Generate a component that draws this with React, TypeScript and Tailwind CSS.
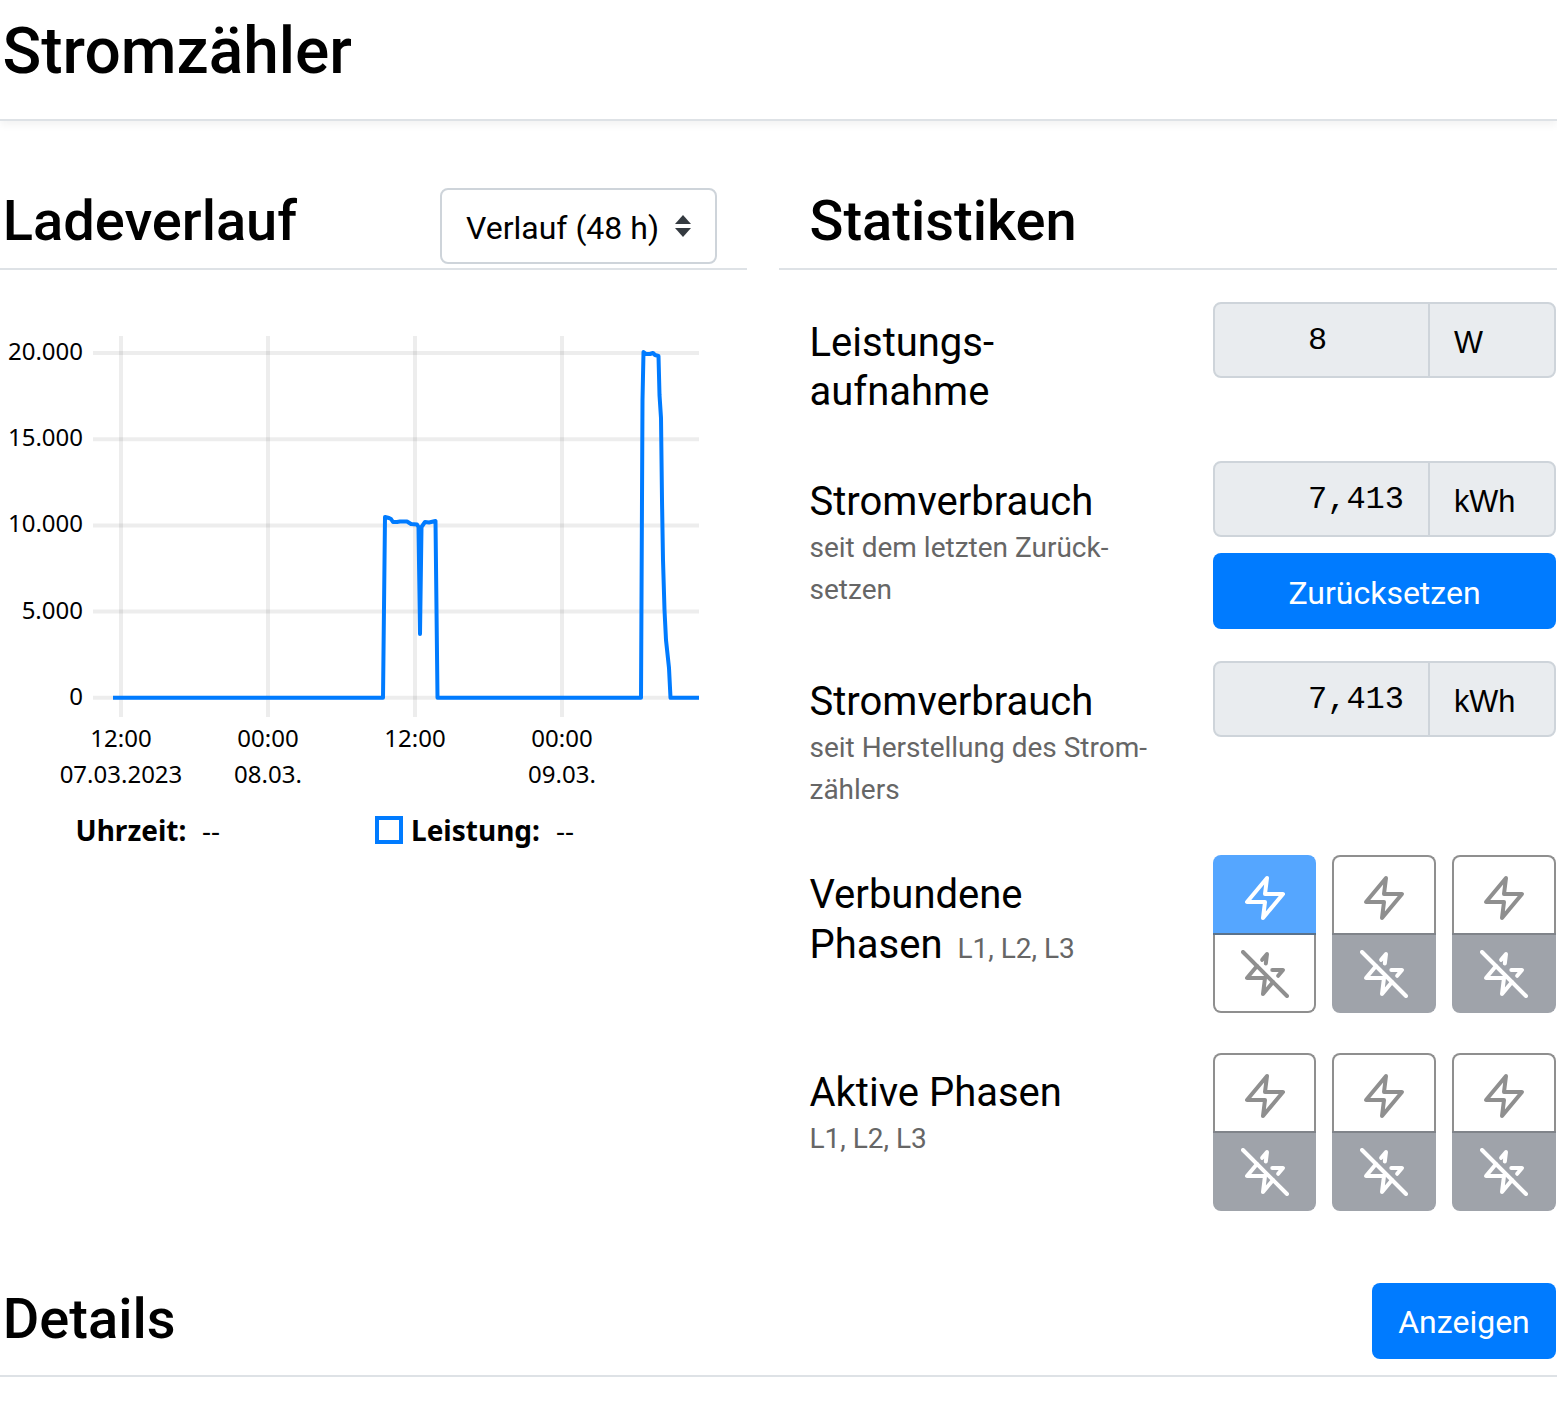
const blue = '#007bff';

function ZapIcon() {
	return (
		<svg
			viewBox="0 0 24 24"
			width="48"
			height="48"
			fill="none"
			stroke="currentColor"
			strokeWidth="2"
			strokeLinecap="round"
			strokeLinejoin="round"
		>
			<polygon points="13 2 3 14 12 14 11 22 21 10 12 10 13 2" />
		</svg>
	);
}

function ZapOff() {
	return (
		<svg
			viewBox="0 0 24 24"
			width="48"
			height="48"
			fill="none"
			stroke="currentColor"
			strokeWidth="2"
			strokeLinecap="round"
			strokeLinejoin="round"
		>
			<polyline points="12.41 6.75 13 2 10.57 4.92" />
			<polyline points="18.57 12.91 21 10 15.66 10" />
			<polyline points="8 8 3 14 12 14 11 22 16 16" />
			<line x1="1" y1="1" x2="23" y2="23" />
		</svg>
	);
}

function PhaseToggle({ active, muted, className }: { active?: boolean; muted?: boolean; className?: string }) {
	return (
		<div className={`flex h-[158px] flex-col ${className ?? 'flex-1'}`}>
			<div
				className={`flex h-[78px] items-center justify-center rounded-t-[8px] border-2 border-b-0 pt-[5px] ${
					active ? 'border-[#55a6ff] bg-[#55a6ff] text-white' : 'border-[#8f8f8f] bg-white text-[#8f8f8f]'
				}`}
			>
				<ZapIcon />
			</div>
			<div className={`h-[2px] ${active ? 'bg-[#5a728c]' : 'bg-[#80848a]'}`} />
			<div
				className={`flex h-[78px] items-center justify-center rounded-b-[8px] border-2 border-t-0 pt-[1px] ${
					muted ? 'border-[#9fa3aa] bg-[#9fa3aa] text-white' : 'border-[#8f8f8f] bg-white text-[#8f8f8f]'
				}`}
			>
				<ZapOff />
			</div>
		</div>
	);
}

function ValueBox({ value, unit }: { value: string; unit: string }) {
	return (
		<div className="flex h-[76px] w-[343px] rounded-[8px] border-2 border-[#ced4da] bg-[#e9ecef] text-black">
			<div className="w-[215px] border-r-2 border-[#ced4da] pl-[93px] pt-[15px] font-['Liberation_Mono',monospace] text-[32px] leading-[44px]">
				{value}
			</div>
			<div className="pl-[24px] pt-[17px] font-['Liberation_Sans',sans-serif] text-[30.72px] leading-[44px]">{unit}</div>
		</div>
	);
}

function StatRow({
	title,
	sub,
	className,
	titleClass,
	children,
}: {
	title: React.ReactNode;
	sub?: string[];
	className?: string;
	titleClass?: string;
	children: React.ReactNode;
}) {
	return (
		<div className={`flex justify-between pr-[1px] ${className ?? ''}`}>
			<div className={`w-[403px] pl-[30.5px] ${titleClass ?? 'pt-[16px]'}`}>
				<div className="text-[40px] leading-[49.6px] text-black">{title}</div>
				{sub && (
					<div className="text-[28px] leading-[42px] text-[#666666]">
						{sub.map((s) => (
							<div key={s}>{s}</div>
						))}
					</div>
				)}
			</div>
			<div className="flex w-[343px] flex-col gap-[16px]">{children}</div>
		</div>
	);
}

const yTicks = [
	{ y: 353, base: 360, label: '20.000' },
	{ y: 439.2, base: 446, label: '15.000' },
	{ y: 525.4, base: 532, label: '10.000' },
	{ y: 611.6, base: 619, label: '5.000' },
	{ y: 697.8, base: 705, label: '0' },
];
const xTicks = [
	{ x: 121, time: '12:00', date: '07.03.2023' },
	{ x: 268, time: '00:00', date: '08.03.' },
	{ x: 415, time: '12:00', date: '' },
	{ x: 562, time: '00:00', date: '09.03.' },
];

const linePoints =
	'113,697.8 383,697.8 385,517 389,518 391,519 393,522 397,522 400,521.5 404,521.5 407,521.5 411,524 417,524.5 418.5,527 420,634 421.5,527 425,522 429,522.5 435.5,521 437.5,697.8 641,697.8 642.5,400 643.5,352 646,354 650,354 653,353 655,355 658.5,356 659.5,395 661,418 662,500 663,560 664.5,610 666,640 669,668 670.5,697.8 699,697.8';

function Chart() {
	return (
		<svg width="747" height="490" viewBox="0 0 747 490" className="block">
			<g transform="translate(0,-320)" fontFamily="'Noto Sans', sans-serif" fontSize="24" fill="#000">
				{yTicks.map((t) => (
					<g key={t.label}>
						<line x1="93" x2="699" y1={t.y} y2={t.y} stroke="#000" strokeOpacity="0.07" strokeWidth="4" />
						<text x="83" y={t.base} textAnchor="end">
							{t.label}
						</text>
					</g>
				))}
				{xTicks.map((t) => (
					<g key={t.x}>
						<line x1={t.x} x2={t.x} y1="336" y2="717" stroke="#000" strokeOpacity="0.07" strokeWidth="4" />
						<text x={t.x} y="747" textAnchor="middle">
							{t.time}
						</text>
						<text x={t.x} y="783" textAnchor="middle">
							{t.date}
						</text>
					</g>
				))}
				<polyline points={linePoints} fill="none" stroke={blue} strokeWidth="4" strokeLinejoin="round" />
			</g>
		</svg>
	);
}

export default function App() {
	return (
		<div className="h-[1410px] w-[1557px] overflow-hidden bg-white font-['Roboto',sans-serif] text-black">
			<div className="h-[121px] border-b-2 border-[#dee2e6] shadow-[0_4px_8px_rgba(0,0,0,0.05)]">
				<h1 className="pl-[2.5px] pt-[16px] text-[64px] font-medium leading-[72px]">Stromzähler</h1>
			</div>

			<div className="flex gap-[32px] pt-[66px]">
				<div className="w-[747px]">
					<div className="flex h-[83px] items-start justify-between border-b-2 border-[#dee2e6] pr-[30px]">
						<h2 className="pl-[2.8px] pt-[4px] text-[56px] font-medium leading-[60px]">Ladeverlauf</h2>
						<div className="mt-[1px] flex h-[76px] w-[277px] items-center justify-between rounded-[8px] border-2 border-[#ced4da] pl-[24px] pr-[24px] text-[32px]">
							<span className="pt-[4px]">Verlauf (48 h)</span>
							<svg width="16" height="22" viewBox="0 0 16 22" fill="#343a40">
								<path d="M8 0 16 9H0Z" />
								<path d="M0 13H16L8 22Z" />
							</svg>
						</div>
					</div>
					<div className="h-[50px]" />
					<Chart />
					<div className="relative h-[40px] font-['Noto_Sans',sans-serif] text-[28px] leading-[40px]">
						<span className="absolute left-[75.5px] top-0 font-bold">Uhrzeit:</span>
						<span className="absolute left-[202px] top-0">--</span>
						<span className="absolute left-[375px] top-[6px] h-[28px] w-[28px] border-4 border-[#007bff]" />
						<span className="absolute left-[411px] top-0 font-bold">Leistung:</span>
						<span className="absolute left-[556px] top-0">--</span>
					</div>
				</div>

				<div className="w-[778px]">
					<div className="h-[83px] border-b-2 border-[#dee2e6] pl-[30.5px] pt-[4px]">
						<h2 className="text-[56px] font-medium leading-[60px]">Statistiken</h2>
					</div>
					<div className="pt-[32px]">
						<StatRow
							title={
								<div className="leading-[49px]">
									Leistungs-
									<br />
									aufnahme
								</div>
							}
							className="h-[159px]"
						>
							<ValueBox value="8" unit="W" />
						</StatRow>
						<StatRow title="Stromverbrauch" sub={['seit dem letzten Zurück-', 'setzen']} className="h-[200px]">
							<ValueBox value="7,413" unit="kWh" />
							<div className="flex h-[76px] items-center justify-center rounded-[8px] bg-[#007bff] pt-[4px] text-[32px] text-white">
								Zurücksetzen
							</div>
						</StatRow>
						<StatRow title="Stromverbrauch" sub={['seit Herstellung des Strom-', 'zählers']} className="h-[194px]">
							<ValueBox value="7,413" unit="kWh" />
						</StatRow>
						<StatRow
							title={
								<>
									Verbundene
									<br />
									Phasen <span className="ml-[5px] text-[28px] text-[#666666]">L1, L2, L3</span>
								</>
							}
							className="h-[198px]"
							titleClass="pt-[15px]"
						>
							<div className="flex gap-[16px]">
								<PhaseToggle active className="w-[103px] flex-none" />
								<PhaseToggle muted />
								<PhaseToggle muted />
							</div>
						</StatRow>
						<StatRow title="Aktive Phasen" sub={['L1, L2, L3']} className="h-[158px]" titleClass="pt-[15px]">
							<div className="flex gap-[16px]">
								<PhaseToggle muted className="w-[103px] flex-none" />
								<PhaseToggle muted />
								<PhaseToggle muted />
							</div>
						</StatRow>
					</div>
				</div>
			</div>

			<div className="mt-[72px] flex h-[94px] items-start justify-between border-b-2 border-[#dee2e6] pr-[1px]">
				<h2 className="pl-[2.8px] pt-[6px] text-[56px] font-medium leading-[60px]">Details</h2>
				<div className="flex h-[76px] w-[184px] items-center justify-center rounded-[8px] bg-[#007bff] pt-[2px] text-[32px] text-white">
					Anzeigen
				</div>
			</div>
		</div>
	);
}
